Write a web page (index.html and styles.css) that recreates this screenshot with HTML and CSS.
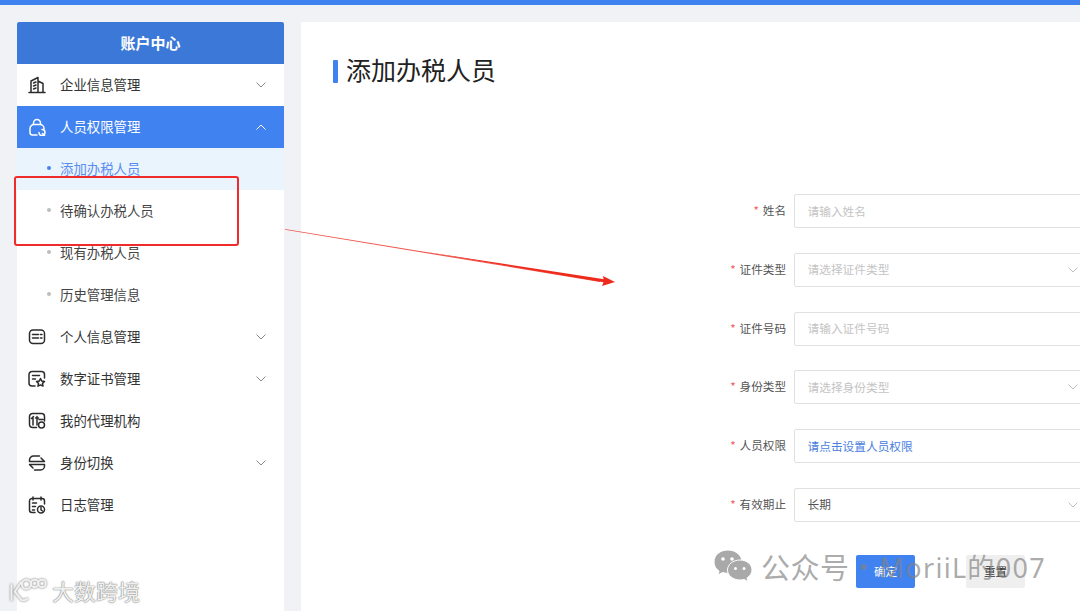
FILE: index.html
```html
<!DOCTYPE html>
<html lang="zh-CN">
<head>
    <meta charset="UTF-8">
    <meta name="viewport" content="width=device-width, initial-scale=1.0">
    <title>添加办税人员</title>
    <link rel="stylesheet" href="styles.css">
</head>
<body>
    <div class="top-bar"></div>

    <div class="page">
        <aside class="sidebar">
            <div class="sidebar-title">账户中心</div>

            <div class="menu-item">
                <svg class="menu-icon" viewBox="0 0 18 18"><path d="M1 16.500h16M3 16V5l7-3.500V16M10 5l5 2.500V16M5.500 7l2.500-1M5.500 10l2.500-1M5.500 13l2.500-1"/></svg>
                <span class="menu-text">企业信息管理</span>
                <svg class="chevron" viewBox="0 0 10 6"><path d="M.5.5 5 5 9.500.5"/></svg>
            </div>

            <div class="menu-item active">
                <svg class="menu-icon" viewBox="0 0 18 18"><path d="M5.500 6.500V5a3.500 3.500 0 0 1 7 0v1.500M9 17H4.500A2.500 2.500 0 0 1 2 14.500v-4a4 4 0 0 1 4-4h6a4 4 0 0 1 4 4v1M14 11.500a3 3 0 1 1-3 3M14.500 15.500l2 2"/></svg>
                <span class="menu-text">人员权限管理</span>
                <svg class="chevron" viewBox="0 0 10 6"><path d="M.5 5.500 5 1l4.500 4.500"/></svg>
            </div>

            <div class="sub-item current"><i class="dot"></i>添加办税人员</div>
            <div class="sub-item"><i class="dot"></i>待确认办税人员</div>
            <div class="sub-item"><i class="dot"></i>现有办税人员</div>
            <div class="sub-item"><i class="dot"></i>历史管理信息</div>

            <div class="menu-item">
                <svg class="menu-icon" viewBox="0 0 18 18"><rect x="1.500" y="2" width="15" height="13.500" rx="3.500"/><path d="M4.500 6.500h6M4.500 10h6M12.500 6.500h1.500M12.500 10h1.500"/></svg>
                <span class="menu-text">个人信息管理</span>
                <svg class="chevron" viewBox="0 0 10 6"><path d="M.5.5 5 5 9.500.5"/></svg>
            </div>

            <div class="menu-item">
                <svg class="menu-icon" viewBox="0 0 18 18"><path d="M7 16H4a3 3 0 0 1-3-3V4.500a3 3 0 0 1 3-3h9.500a3 3 0 0 1 3 3V8M4.500 5.500h7M4.500 9h3M12.500 8.500l1.300 2.600 2.700.4-2 1.900.5 2.700-2.500-1.300-2.500 1.300.5-2.700-2-1.900 2.700-.4z"/></svg>
                <span class="menu-text">数字证书管理</span>
                <svg class="chevron" viewBox="0 0 10 6"><path d="M.5.5 5 5 9.500.5"/></svg>
            </div>

            <div class="menu-item">
                <svg class="menu-icon" viewBox="0 0 18 18"><path d="M8.500 15.500h-4a3 3 0 0 1-3-3V4.500a3 3 0 0 1 3-3h9a3 3 0 0 1 3 3V9M3.500 6.500l2-2M5 6v7M7.500 6h3M9 4.500V13M11 7.500h4"/><circle cx="13.500" cy="13" r="3"/></svg>
                <span class="menu-text">我的代理机构</span>
            </div>

            <div class="menu-item">
                <svg class="menu-icon" viewBox="0 0 18 18"><path d="M1.500 7.500V6A4 4 0 0 1 5.500 2h6M1.500 7.500H16.500l-3.500-3.500M16.500 10.500V12a4 4 0 0 1-4 4h-6M16.500 10.500H1.500L5 14"/></svg>
                <span class="menu-text">身份切换</span>
                <svg class="chevron" viewBox="0 0 10 6"><path d="M.5.5 5 5 9.500.5"/></svg>
            </div>

            <div class="menu-item">
                <svg class="menu-icon" viewBox="0 0 18 18"><path d="M7 16.500H4a2.500 2.500 0 0 1-2.500-2.500V5A2.500 2.500 0 0 1 4 2.500h10A2.500 2.500 0 0 1 16.500 5v3M5 1v3M13 1v3M4.500 7h4M4.500 10.500h3M4.500 14h2M13 11.500V14l1.500 1"/><circle cx="13" cy="13.500" r="3.500"/></svg>
                <span class="menu-text">日志管理</span>
            </div>
        </aside>

        <main class="content">
            <h1 class="page-title">添加办税人员</h1>

            <form class="tax-form">
                <div class="form-row">
                    <label class="form-label"><em>*</em>姓名</label>
                    <div class="field placeholder">请输入姓名</div>
                </div>
                <div class="form-row">
                    <label class="form-label"><em>*</em>证件类型</label>
                    <div class="field placeholder">请选择证件类型
                        <svg class="field-arrow" viewBox="0 0 10 6"><path d="M.5.5 5 5 9.500.5"/></svg>
                    </div>
                </div>
                <div class="form-row">
                    <label class="form-label"><em>*</em>证件号码</label>
                    <div class="field placeholder">请输入证件号码</div>
                </div>
                <div class="form-row">
                    <label class="form-label"><em>*</em>身份类型</label>
                    <div class="field placeholder">请选择身份类型
                        <svg class="field-arrow" viewBox="0 0 10 6"><path d="M.5.5 5 5 9.500.5"/></svg>
                    </div>
                </div>
                <div class="form-row">
                    <label class="form-label"><em>*</em>人员权限</label>
                    <div class="field link">请点击设置人员权限</div>
                </div>
                <div class="form-row">
                    <label class="form-label"><em>*</em>有效期止</label>
                    <div class="field">长期
                        <svg class="field-arrow" viewBox="0 0 10 6"><path d="M.5.5 5 5 9.500.5"/></svg>
                    </div>
                </div>

                <div class="form-actions">
                    <button type="button" class="btn btn-primary">确定</button>
                    <button type="button" class="btn btn-reset">重置</button>
                </div>
            </form>
        </main>
    </div>

    <!-- annotations drawn over the screenshot -->
    <div class="mark-box"></div>
    <svg class="mark-arrow" viewBox="0 0 1080 611">
        <polygon class="arrow-fade" points="285,229 285,229.800 600,282 600,280.500"/>
        <polygon class="arrow-body" points="420,251 606,279.500 605,282.500"/>
        <polygon class="arrow-body" points="603,276 615,282 602,286 604,281"/>
    </svg>

    <div class="wechat-mark">
        <svg class="wechat-icon" viewBox="0 0 40 34">
            <path class="bubble-back" d="M15 1C7 1 1 6 1 13c0 4 2 7 5 9l-1 4 4.500-2.500c1.500.5 3.500.8 5.500.8 7 0 14-5 14-11.300S23 1 15 1z"/>
            <path class="bubble-front" d="M27 11c-7 0-12.500 4.500-12.500 10S20 31 27 31c1.500 0 3-.2 4-.6l4 2.300-1-3.700c3-2 5-5 5-8 0-5.500-5-10-12-10z"/>
            <circle class="eye" cx="10" cy="10" r="1.800"/><circle class="eye" cx="19" cy="10" r="1.800"/>
            <circle class="eye" cx="22.500" cy="19.500" r="1.500"/><circle class="eye" cx="31" cy="19.500" r="1.500"/>
        </svg>
        <span class="wechat-name">公众号</span>
        <span class="wechat-dot">·</span>
        <span class="wechat-author">MoriiL的007</span>
    </div>

    <div class="corner-mark">
        <svg class="corner-logo" viewBox="0 0 46 30">
            <path d="M3 8v20M15 5 7 17l8 10c3 1 6 0 8-2"/>
            <circle cx="21" cy="8" r="5.500"/><circle cx="31" cy="7" r="4.500"/><circle cx="40" cy="7" r="4.500"/>
        </svg>
        <span>大数跨境</span>
    </div>
</body>
</html>
```

FILE: styles.css
```css
html, body {
    margin: 0;
    height: 100%;
    overflow: hidden;
}

body {
    background: #f1f2f6;
    font-family: "Microsoft YaHei", "Noto Sans CJK SC", "Noto Sans", sans-serif;
    color: #333;
    position: relative;
}

.top-bar {
    height: 5px;
    background: #3f82f0;
}

.page {
    display: flex;
    gap: 17px;
    padding: 17px 0 0 17px;
    height: 606px;
    box-sizing: border-box;
}

/* sidebar */
.sidebar {
    width: 267px;
    flex: none;
    background: white;
}

.sidebar-title {
    height: 42px;
    line-height: 41px;
    text-align: center;
    background: #3c78d8;
    color: white;
    font-size: 15px;
    font-weight: 700;
    border-radius: 2px 2px 0 0;
}

.menu-item {
    height: 42px;
    display: flex;
    align-items: center;
    padding: 0 18px 0 11px;
    font-size: 13.4px;
    color: #333;
}

.menu-item.active {
    background: #3f82f0;
    color: white;
}

.menu-icon {
    width: 18px;
    height: 18px;
    margin-right: 14px;
    fill: none;
    stroke: #2b2b2b;
    stroke-width: 1.5;
    stroke-linecap: round;
    stroke-linejoin: round;
}

.active .menu-icon { stroke: white; }

.menu-text {
    flex: 1;
    margin-bottom: 2px;
}

.chevron {
    width: 10px;
    height: 6px;
    fill: none;
    stroke: #8a8a8a;
    stroke-width: 1;
}

.active .chevron { stroke: white; }

.sub-item {
    height: 42px;
    box-sizing: border-box;
    display: flex;
    align-items: center;
    padding: 0 0 2px 30px;
    font-size: 13.4px;
    color: #444;
}

.sub-item.current {
    background: #e9f4fd;
    color: #5b8def;
}

.dot {
    width: 4px;
    height: 4px;
    border-radius: 50%;
    background: #bdbdbd;
    margin-right: 9px;
}

.current .dot { background: #4a84e8; }

/* main panel */
.content {
    flex: 1;
    min-width: 0;
    background: white;
    overflow: hidden;
}

.page-title {
    margin: 30px 0 0 31px;
    padding-left: 14px;
    height: 38px;
    line-height: 35px;
    font-size: 25px;
    font-weight: 400;
    color: #222;
    position: relative;
}

.page-title::before {
    content: "";
    position: absolute;
    left: 1px;
    top: 8px;
    width: 5px;
    height: 23px;
    border-radius: 1px;
    background: #3f82f0;
}

.tax-form {
    margin-top: 104px;
    padding-left: 400px;
}

.form-row {
    display: flex;
    align-items: center;
    height: 34px;
    margin-bottom: 24.800px;
}

.form-label {
    width: 85px;
    flex: none;
    margin-right: 8px;
    margin-bottom: 2px;
    text-align: right;
    font-size: 11.6px;
    color: #555;
}

.form-label em {
    color: #ee5b5b;
    font-style: normal;
    margin-right: 4px;
}

.field {
    flex: none;
    width: 290px;
    height: 34px;
    box-sizing: border-box;
    border: 1px solid #e0e0e0;
    border-radius: 2px;
    padding: 0 13px 2px 12.500px;
    display: flex;
    align-items: center;
    position: relative;
    font-size: 11.7px;
    color: #555;
}

.field.placeholder { color: #c4c4c4; }
.field.link { color: #4a80e0; }

.field-arrow {
    position: absolute;
    left: 273px;
    top: 13px;
    width: 10px;
    height: 6px;
    fill: none;
    stroke: #c0c0c0;
    stroke-width: 1;
}

.form-actions {
    display: flex;
    gap: 51px;
    margin: 33px 0 0 155px;
}

.btn {
    width: 59px;
    height: 33px;
    border: 0;
    border-radius: 2px;
    padding: 0;
    font: inherit;
    font-size: 11.6px;
}

.btn-primary { background: #3f82f0; color: white; }
.btn-reset { background: #efefef; color: #333; }

/* annotations */
.mark-box {
    position: absolute;
    left: 14px;
    top: 176px;
    width: 225px;
    height: 70px;
    box-sizing: border-box;
    border: 2.500px solid #f02b2b;
    border-radius: 3px;
}

.mark-arrow {
    position: absolute;
    left: 0;
    top: 0;
    width: 1080px;
    height: 611px;
}

.arrow-fade { fill: #f0584e; }
.arrow-body { fill: #ee2a1c; }

.wechat-mark {
    position: absolute;
    left: 713px;
    top: 546px;
    display: flex;
    align-items: center;
    height: 40px;
    color: rgba(130, 130, 130, 0.68);
}

.wechat-icon {
    width: 40px;
    height: 34px;
    margin-right: 8px;
}

.bubble-back, .bubble-front { fill: #a9a9a9; stroke: white; stroke-width: 1; }
.eye { fill: white; }

.wechat-name {
    font-size: 29px;
    letter-spacing: 0.500px;
}

.wechat-dot {
    font-size: 28px;
    width: 28px;
    margin-right: 2px;
    text-align: center;
}

.wechat-author {
    font-size: 27px;
    letter-spacing: 1.300px;
    font-family: "Noto Sans", "Noto Sans CJK SC", sans-serif;
}

.corner-mark {
    position: absolute;
    left: 9px;
    top: 576px;
    display: flex;
    align-items: center;
    gap: 5px;
    color: #f0f0f0;
    font-size: 22px;
    line-height: 28px;
    text-shadow: 0 0 1.500px #777, 0 0 1px #888;
}

.corner-logo {
    width: 38px;
    height: 28px;
    fill: none;
    stroke: #f0f0f0;
    stroke-width: 2.500;
    filter: drop-shadow(0 0 1px #777);
}
```
